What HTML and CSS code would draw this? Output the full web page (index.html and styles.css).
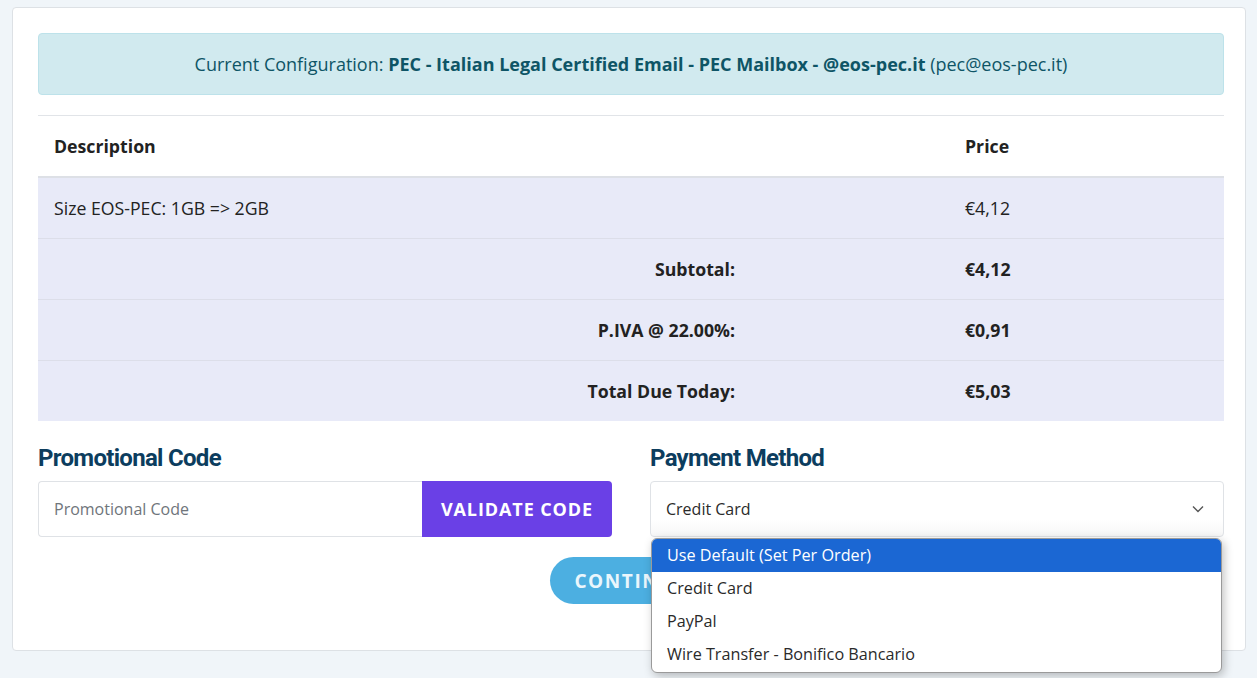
FILE: index.html
```html
<!DOCTYPE html>
<html lang="en">
<head>
    <meta charset="UTF-8">
    <meta name="viewport" content="width=device-width, initial-scale=1.0">
    <title>Upgrade - Order Summary</title>
    <link rel="stylesheet" href="styles.css">
</head>
<body>
    <div class="card">
        <div class="alert-info">
            Current Configuration: <strong>PEC - Italian Legal Certified Email - PEC Mailbox - @eos-pec.it</strong> (pec@eos-pec.it)
        </div>

        <table class="summary">
            <thead>
                <tr>
                    <th colspan="2">Description</th>
                    <th class="col-price">Price</th>
                </tr>
            </thead>
            <tbody>
                <tr>
                    <td colspan="2">Size EOS-PEC: 1GB =&gt; 2GB</td>
                    <td class="col-price">€4,12</td>
                </tr>
                <tr class="total-row">
                    <td class="label">Subtotal:</td>
                    <td></td>
                    <td class="col-price">€4,12</td>
                </tr>
                <tr class="total-row">
                    <td class="label">P.IVA @ 22.00%:</td>
                    <td></td>
                    <td class="col-price">€0,91</td>
                </tr>
                <tr class="total-row">
                    <td class="label">Total Due Today:</td>
                    <td></td>
                    <td class="col-price">€5,03</td>
                </tr>
            </tbody>
        </table>

        <div class="options">
            <div class="option-col">
                <h3>Promotional Code</h3>
                <div class="input-group">
                    <input type="text" placeholder="Promotional Code">
                    <button class="validate-btn">Validate Code</button>
                </div>
            </div>
            <div class="option-col">
                <h3>Payment Method</h3>
                <div class="select-wrap">
                    <div class="fake-select">
                        <span>Credit Card</span>
                        <svg width="14" height="14" viewBox="0 0 14 14"><path d="M2 4.5l5 5 5-5" fill="none" stroke="#555" stroke-width="1.4"/></svg>
                    </div>
                    <ul class="select-popup">
                        <li class="active">Use Default (Set Per Order)</li>
                        <li>Credit Card</li>
                        <li>PayPal</li>
                        <li>Wire Transfer - Bonifico Bancario</li>
                    </ul>
                </div>
            </div>
        </div>

        <div class="actions">
            <button class="continue-btn">Continue</button>
        </div>
    </div>
</body>
</html>
```

FILE: styles.css
```css
html {
    background-color: #f0f5f9;
}
body {
    margin: 0;
    padding: 7px 11px 28px 12px;
    min-height: 643px;
    background-color: #f0f5f9;
    font-family: "Open Sans", sans-serif;
    color: #222;
}
.card {
    background-color: #fff;
    border: 1px solid #dde1e5;
    border-radius: 4px;
    padding: 25px 21px 46px 25px;
}
.alert-info {
    background-color: #d1eaef;
    border: 1px solid #bde2ea;
    border-radius: 4px;
    color: #0e5566;
    text-align: center;
    font-size: 18px;
    line-height: 60px;
    height: 60px;
}
.alert-info strong {
    font-weight: 700;
}
.summary {
    width: 100%;
    margin-top: 20px;
    border-collapse: collapse;
    font-size: 17.7px;
}
.summary th {
    text-align: left;
    font-weight: 700;
    height: 60px;
    padding: 0 16px;
    border-top: 1px solid #e1e4e8;
    border-bottom: 2px solid #dde0e6;
}
.summary td {
    background-color: #e8eaf8;
    height: 60px;
    padding: 0 16px;
    border-bottom: 1px solid #dcdee9;
}
.summary tr:last-child td {
    border-bottom: none;
}
.summary .col-price {
    width: 243px;
}
.summary .total-row td {
    font-weight: 700;
}
.summary .label {
    text-align: right;
    width: 681px;
}
.options {
    display: grid;
    grid-template-columns: 1fr 1fr;
    gap: 38px;
    margin-top: 22px;
}
.options h3 {
    margin: 0 0 8px;
    font-family: Roboto, sans-serif;
    font-weight: 700;
    font-size: 24px;
    letter-spacing: -0.7px;
    color: #0c3d5e;
    line-height: 30px;
}
.input-group {
    display: flex;
    height: 56px;
}
.input-group input {
    flex: 1;
    min-width: 0;
    border: 1px solid #dfe2e6;
    border-right: none;
    border-radius: 4px 0 0 4px;
    padding: 0 15px;
    font-family: inherit;
    font-size: 16px;
    outline: none;
}
.input-group input::placeholder {
    color: #6f757b;
}
.validate-btn {
    width: 190px;
    border: none;
    border-radius: 0 4px 4px 0;
    background-color: #6a40e6;
    color: #fff;
    font-family: inherit;
    font-weight: 700;
    font-size: 18px;
    letter-spacing: 0.9px;
    text-transform: uppercase;
    cursor: pointer;
}
.select-wrap {
    position: relative;
}
.fake-select {
    height: 54px;
    border: 1px solid #dfe2e6;
    border-radius: 4px;
    display: flex;
    align-items: center;
    justify-content: space-between;
    padding: 0 18px 0 15px;
    font-size: 16px;
    color: #2b2b2b;
    background: linear-gradient(#fff 70%, #f7f7f7);
}
.select-popup {
    position: absolute;
    top: 57px;
    left: 1px;
    right: 2px;
    margin: 0;
    padding: 0;
    list-style: none;
    background-color: #fff;
    border: 1px solid #9a9a9a;
    border-radius: 6px;
    box-shadow: 2px 3px 10px rgba(0, 0, 0, 0.25);
    overflow: hidden;
    z-index: 5;
}
.select-popup li {
    height: 33px;
    line-height: 33px;
    padding: 0 15px;
    font-size: 16.2px;
    color: #2a2a2a;
}
.select-popup li:last-child {
    height: 34px;
}
.select-popup li.active {
    background-color: #1b67d3;
    color: #fff;
}
.actions {
    text-align: center;
    margin-top: 20px;
}
.continue-btn {
    height: 47px;
    padding: 0 24px;
    border: none;
    border-radius: 24px;
    background-color: #4cafe1;
    color: #eaf6fc;
    font-family: inherit;
    font-weight: 700;
    font-size: 19px;
    letter-spacing: 1.6px;
    text-transform: uppercase;
    cursor: pointer;
}
```
